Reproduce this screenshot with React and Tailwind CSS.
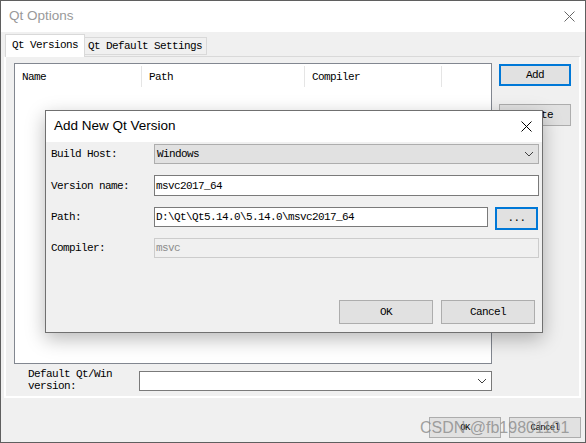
import React from 'react'

const mono = "font-['Liberation_Mono',monospace] text-[11px] tracking-[-0.6px] leading-[12px]"
const ui = "font-['Liberation_Sans',Arial,sans-serif]"

function Chevron() {
  return (
    <svg width="10" height="6" viewBox="0 0 10 6" className="shrink-0">
      <polyline points="1,1 5,5 9,1" fill="none" stroke="#404040" strokeWidth="1" />
    </svg>
  )
}

function CloseX({ color = '#000', size = 11 }) {
  return (
    <svg width={size} height={size} viewBox="0 0 11 11">
      <path d="M0.5 0.5 L10.5 10.5 M10.5 0.5 L0.5 10.5" stroke={color} strokeWidth="1" fill="none" />
    </svg>
  )
}

function Btn({ children, className = '' }) {
  return (
    <div className={`flex items-center justify-center border border-[#adadad] bg-[#e1e1e1] text-black ${mono} ${className}`}>
      {children}
    </div>
  )
}

function AddVersionDialog() {
  return (
    <div className="absolute left-[44px] top-[109px] flex h-[223px] w-[498px] flex-col border border-[#707070] bg-[#f0f0f0] shadow-[0_6px_18px_rgba(0,0,0,0.28)]">
      <div className="flex h-[31px] shrink-0 items-center justify-between bg-white pl-[8px] pr-[10px]">
        <span className={`${ui} text-[13.5px] text-black`}>Add New Qt Version</span>
        <CloseX />
      </div>

      <div className={`flex flex-col pl-[5px] pr-[3px] ${mono}`}>
        <div className="mt-[2px] flex h-[20px] items-center">
          <span className="w-[103px]">Build Host:</span>
          <div className="flex h-[20px] flex-1 items-center justify-between border border-[#adadad] bg-[#e1e1e1] pl-[2px] pr-[4px]">
            <span>Windows</span>
            <Chevron />
          </div>
        </div>

        <div className="mt-[11px] flex h-[21px] items-center">
          <span className="w-[103px]">Version name:</span>
          <div className="flex h-[21px] flex-1 items-center border border-[#7a7a7a] bg-white pl-[1px]">
            msvc2017_64
          </div>
        </div>

        <div className="mt-[11px] flex h-[23px] items-start">
          <span className="flex h-[20px] w-[103px] items-center">Path:</span>
          <div className="flex h-[20px] w-[334px] items-center border border-[#7a7a7a] bg-white pl-[1px]">
            D:\Qt\Qt5.14.0\5.14.0\msvc2017_64
          </div>
          <div className="ml-[7px] flex h-[23px] w-[43px] items-center justify-center border-2 border-[#0078d7] bg-[#e1e1e1] pb-[2px]">
            ...
          </div>
        </div>

        <div className="mt-[8px] flex h-[20px] items-center">
          <span className="w-[103px]">Compiler:</span>
          <div className="flex h-[20px] flex-1 items-center border border-[#cccccc] bg-[#f0f0f0] pl-[1px] text-[#8c8c8c]">
            msvc
          </div>
        </div>

        <div className="mt-[42px] flex justify-end gap-[8px] pr-[4px]">
          <Btn className="h-[24px] w-[94px]">OK</Btn>
          <Btn className="h-[24px] w-[94px]">Cancel</Btn>
        </div>
      </div>
    </div>
  )
}

export default function App() {
  const cols = [
    { label: 'Name', w: 'w-[127px]' },
    { label: 'Path', w: 'w-[163px]' },
    { label: 'Compiler', w: 'w-[137px]' },
  ]

  return (
    <div className="relative flex h-[443px] w-[586px] flex-col overflow-hidden border border-[#5f5f5f] bg-[#f0f0f0]">
      {/* title bar */}
      <div className="flex h-[31px] shrink-0 items-center justify-between bg-white pl-[8px] pr-[10px]">
        <span className={`${ui} text-[13.5px] text-[#999999]`}>Qt Options</span>
        <CloseX color="#666666" />
      </div>

      {/* tabs */}
      <div className={`relative z-10 -mb-px flex items-start pl-[4px] pt-[2px] ${mono}`}>
        <div className="flex h-[23px] w-[80px] items-center border border-b-0 border-[#d9d9d9] bg-white pl-[6px] pb-[2px]">
          Qt Versions
        </div>
        <div className="mt-[3px] flex h-[18px] w-[122px] items-center border border-l-0 border-[#d9d9d9] bg-[#f0f0f0] pl-[3px]">
          Qt Default Settings
        </div>
      </div>

      {/* tab panel */}
      <div className="ml-[3px] flex h-[342px] w-[577px] flex-col border-x-2 border-b-2 border-t border-white border-t-[#d9d9d9] bg-[#f0f0f0] pl-[8px] pt-[6px]">
        <div className="flex">
          <div className="flex h-[301px] w-[478px] flex-col border border-[#828790] bg-white">
            <div className={`flex h-[25px] ${mono}`}>
              {cols.map((c) => (
                <div key={c.label} className={`flex ${c.w} items-center justify-between`}>
                  <span className="pl-[7px] pt-[1px]">{c.label}</span>
                  <div className="my-[2px] h-[21px] w-px bg-[#e5e5e5]" />
                </div>
              ))}
            </div>
          </div>
          <div className={`ml-[7px] flex flex-col ${mono}`}>
            <div className="mt-[1px] flex h-[22px] w-[72px] items-center justify-center border-2 border-[#0078d7] bg-[#e1e1e1]">
              Add
            </div>
            <Btn className="mt-[18px] h-[22px] w-[72px]">Delete</Btn>
          </div>
        </div>

        <div className={`mt-[4px] flex pl-[14px] ${mono}`}>
          <div className="w-[111px]">
            Default Qt/Win
            <br />
            version:
          </div>
          <div className="mt-[3px] flex h-[20px] w-[353px] items-center justify-end border border-[#7a7a7a] bg-white pr-[4px]">
            <Chevron />
          </div>
        </div>
      </div>

      {/* bottom buttons */}
      <div className="flex justify-end gap-[8px] pr-[4px] pt-[19px]">
        <Btn className="h-[21px] w-[72px] !text-[9px]">OK</Btn>
        <Btn className="h-[21px] w-[72px] !text-[9px]">Cancel</Btn>
      </div>

      <AddVersionDialog />

      {/* watermark */}
      <div className={`absolute left-[419px] top-[417px] ${ui} text-[16px] leading-[20px] text-[#8a8a8a]/80`}>
        CSDN @fb19801101
      </div>
    </div>
  )
}
